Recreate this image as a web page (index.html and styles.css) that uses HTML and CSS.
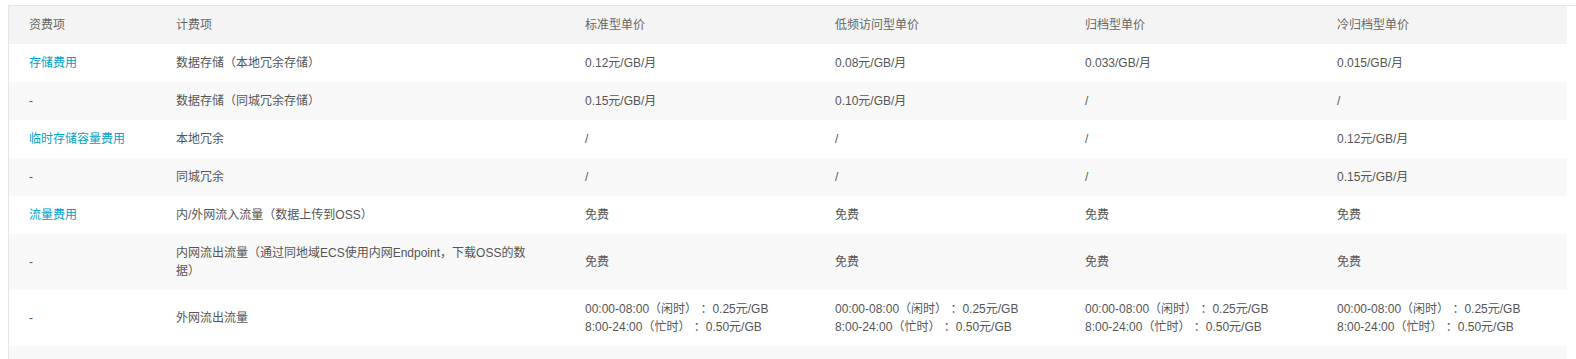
FILE: index.html
```html
<!DOCTYPE html>
<html lang="zh-CN">
<head>
  <meta charset="UTF-8" />
  <title>OSS 计费项</title>
  <link rel="stylesheet" href="styles.css">
</head>
<body>
  <div class="table-wrap">
    <table class="price-table">
      <colgroup>
        <col class="c-type">
        <col class="c-item">
        <col class="c-price">
        <col class="c-price">
        <col class="c-price2">
        <col class="c-price">
      </colgroup>
      <thead>
        <tr>
          <th>资费项</th>
          <th class="item">计费项</th>
          <th>标准型单价</th>
          <th>低频访问型单价</th>
          <th>归档型单价</th>
          <th>冷归档型单价</th>
        </tr>
      </thead>
      <tbody>
        <tr>
          <td><a href="#">存储费用</a></td>
          <td class="item">数据存储（本地冗余存储）</td>
          <td>0.12元/GB/月</td>
          <td>0.08元/GB/月</td>
          <td>0.033/GB/月</td>
          <td>0.015/GB/月</td>
        </tr>
        <tr>
          <td>-</td>
          <td class="item">数据存储（同城冗余存储）</td>
          <td>0.15元/GB/月</td>
          <td>0.10元/GB/月</td>
          <td>/</td>
          <td>/</td>
        </tr>
        <tr>
          <td><a href="#">临时存储容量费用</a></td>
          <td class="item">本地冗余</td>
          <td>/</td>
          <td>/</td>
          <td>/</td>
          <td>0.12元/GB/月</td>
        </tr>
        <tr>
          <td>-</td>
          <td class="item">同城冗余</td>
          <td>/</td>
          <td>/</td>
          <td>/</td>
          <td>0.15元/GB/月</td>
        </tr>
        <tr>
          <td><a href="#">流量费用</a></td>
          <td class="item">内/外网流入流量（数据上传到OSS）</td>
          <td>免费</td>
          <td>免费</td>
          <td>免费</td>
          <td>免费</td>
        </tr>
        <tr>
          <td>-</td>
          <td class="item">内网流出流量（通过同地域ECS使用内网Endpoint，下载OSS的数据）</td>
          <td>免费</td>
          <td>免费</td>
          <td>免费</td>
          <td>免费</td>
        </tr>
        <tr>
          <td>-</td>
          <td class="item">外网流出流量</td>
          <td>00:00-08:00（闲时） ：0.25元/GB<br>8:00-24:00（忙时） ：0.50元/GB</td>
          <td>00:00-08:00（闲时） ：0.25元/GB<br>8:00-24:00（忙时） ：0.50元/GB</td>
          <td>00:00-08:00（闲时） ：0.25元/GB<br>8:00-24:00（忙时） ：0.50元/GB</td>
          <td>00:00-08:00（闲时） ：0.25元/GB<br>8:00-24:00（忙时） ：0.50元/GB</td>
        </tr>
        <tr class="empty-row">
          <td></td><td></td><td></td><td></td><td></td><td></td>
        </tr>
      </tbody>
    </table>
  </div>
</body>
</html>
```

FILE: styles.css
```css
* {
  box-sizing: border-box;
}

body {
  margin: 0;
  padding-top: 5px;
  padding-left: 8px;
  background: #fff;
  font-family: "Liberation Sans", "Noto Sans CJK SC", sans-serif;
  font-size: 12px;
  color: #555;
}

.table-wrap {
  border-top: 1px solid #e6e6e6;
  border-left: 1px solid #e6e6e6;
}

.price-table {
  width: 1558px;
  border-collapse: collapse;
  table-layout: fixed;
}

.c-type { width: 147px; }
.c-item { width: 409px; }
.c-price { width: 250px; }
.c-price2 { width: 252px; }

.price-table th,
.price-table td {
  padding: 10px 20px;
  line-height: 18px;
  text-align: left;
  vertical-align: middle;
  font-weight: normal;
}

.price-table .item {
  padding-right: 30px;
}

.price-table th {
  background: #f4f4f4;
  color: #666;
}

.price-table tbody tr:nth-child(even) {
  background: #f8f8f8;
}

.price-table a {
  color: #00a2ca;
  text-decoration: none;
}

.empty-row td {
  height: 38px;
}
```
